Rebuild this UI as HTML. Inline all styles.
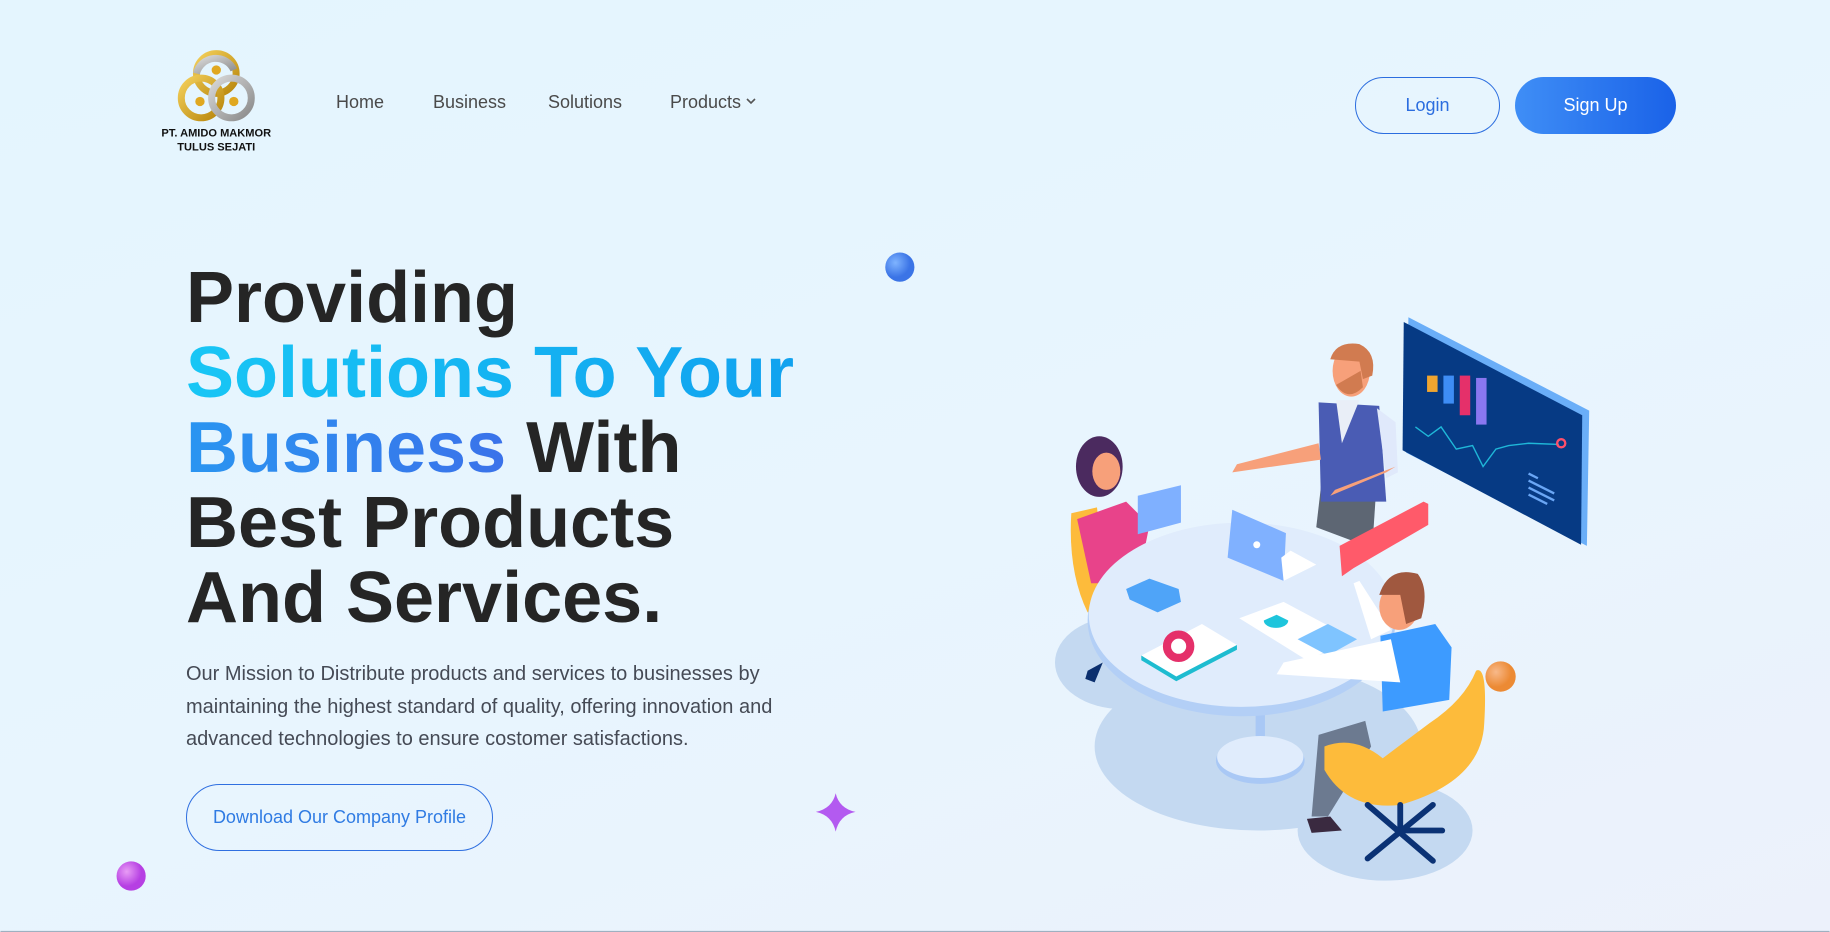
<!DOCTYPE html>
<html><head><meta charset="utf-8">
<style>
*{margin:0;padding:0;box-sizing:border-box}
body{width:1830px;height:932px;overflow:hidden;font-family:"Liberation Sans",sans-serif;background:linear-gradient(160deg,#e4f5fe 0%,#e8f5fe 55%,#ecf1fb 100%);position:relative}
.nav a{position:absolute;top:92px;font-size:18px;color:#4a4a4a;text-decoration:none}
.btn{position:absolute;top:77px;height:57px;border-radius:29px;font-size:18px;display:flex;align-items:center;justify-content:center}
h1{position:absolute;left:186px;top:261px;font-size:72px;line-height:75px;font-weight:700;color:#252525;letter-spacing:0px}
.g1{background:linear-gradient(90deg,#18c6f5,#11a2ef);-webkit-background-clip:text;background-clip:text;color:transparent}
.g2{background:linear-gradient(90deg,#2a95f1,#3a72ea);-webkit-background-clip:text;background-clip:text;color:transparent}
p.m{position:absolute;left:186px;top:658px;width:640px;font-size:20px;line-height:32.5px;color:#454a55}
.dl{position:absolute;left:186px;top:784px;width:307px;height:67px;border:1.5px solid #2f6fe0;border-radius:34px;color:#2f7be3;font-size:18px;display:flex;align-items:center;justify-content:center}
</style></head><body>
<svg style="position:absolute;left:0;top:0" width="1830" height="932" viewBox="0 0 1568 799">
<defs>
<radialGradient id="bd" cx="35%" cy="35%"><stop offset="0" stop-color="#7fb4ff"/><stop offset="1" stop-color="#3b74e6"/></radialGradient>
<radialGradient id="od" cx="35%" cy="35%"><stop offset="0" stop-color="#f8b98a"/><stop offset="1" stop-color="#ec8a34"/></radialGradient>
<radialGradient id="pd" cx="35%" cy="35%"><stop offset="0" stop-color="#e89cf5"/><stop offset="1" stop-color="#b63fe3"/></radialGradient>
<linearGradient id="gold" x1="0" y1="0" x2="1" y2="1"><stop offset="0" stop-color="#f3cf5a"/><stop offset="1" stop-color="#b8860b"/></linearGradient>
<linearGradient id="sil" x1="0" y1="0" x2="1" y2="1"><stop offset="0" stop-color="#d8d8d8"/><stop offset="1" stop-color="#8a8a8a"/></linearGradient>
</defs>
<g fill="none" stroke-width="6">
<circle cx="185" cy="63" r="17" stroke="url(#gold)"/>
<circle cx="172" cy="84" r="17" stroke="url(#gold)"/>
<circle cx="198" cy="84" r="17" stroke="url(#sil)"/>
<path d="M168 63 A17 17 0 0 1 200 60" stroke="url(#sil)"/>
</g>
<circle cx="185" cy="60" r="4" fill="#e0a820"/><circle cx="171" cy="87" r="4" fill="#e0a820"/><circle cx="200" cy="87" r="4" fill="#e0a820"/>
<text x="185" y="117" font-size="9.5" font-weight="700" text-anchor="middle" font-family="Liberation Sans" fill="#111">PT. AMIDO MAKMOR</text>
<text x="185" y="129" font-size="9.5" font-weight="700" text-anchor="middle" font-family="Liberation Sans" fill="#111">TULUS SEJATI</text>
<circle cx="771" cy="229" r="12.5" fill="url(#bd)"/>
<circle cx="1286" cy="580" r="13" fill="url(#od)"/>
<circle cx="112" cy="751" r="12.5" fill="url(#pd)"/>
<path d="M716 680 Q719 693 733 696 Q719 699 716 713 Q713 699 699 696 Q713 693 716 680Z" fill="#b35af0"/>
<ellipse cx="1078" cy="640" rx="140" ry="72" fill="#c4d9f1"/>
<ellipse cx="962" cy="568" rx="58" ry="40" fill="#c4d9f1"/>
<ellipse cx="1187" cy="712" rx="75" ry="43" fill="#c4d9f1"/>
<polygon points="1207,272 1362,352 1360,468 1205,388" fill="#6aaef8"/>
<polygon points="1203,276 1356,356 1355,467 1202,386" fill="#063a84"/>
<rect x="1223" y="322" width="9" height="14" fill="#f0a530"/>
<rect x="1237" y="322" width="9" height="24" fill="#3e8df5"/>
<rect x="1251" y="322" width="9" height="34" fill="#e5306a"/>
<rect x="1265" y="324" width="9" height="40" fill="#8a77f0"/>
<polyline points="1213,366 1224,374 1235,366 1248,385 1262,382 1271,400 1282,385 1293,382 1310,380 1336,381" fill="none" stroke="#1fb7d8" stroke-width="1.2"/>
<circle cx="1338" cy="380" r="3.5" fill="none" stroke="#ff4f6a" stroke-width="2"/>
<g stroke="#6aa6f5" stroke-width="2"><line x1="1310" y1="406" x2="1318" y2="410"/><line x1="1310" y1="412" x2="1332" y2="423"/><line x1="1310" y1="418" x2="1332" y2="429"/><line x1="1310" y1="424" x2="1326" y2="432"/></g>
<path d="M1128 452 L1134 400 L1180 410 L1176 470Z" fill="#5d6673"/>
<path d="M1130 345 L1182 348 L1188 430 L1132 430Z" fill="#4a5cb4"/>
<path d="M1145 343 L1165 343 L1150 380Z" fill="#e9eef7"/>
<path d="M1180 350 L1196 362 L1198 405 L1188 410Z" fill="#e0e9fb"/>
<path d="M1130 380 L1060 398 L1056 405 L1132 394Z" fill="#f7a07a"/>
<path d="M1188 405 L1140 425 L1144 420 L1196 400Z" fill="#f7a07a"/>
<ellipse cx="1158" cy="318" rx="16" ry="22" fill="#f7a07a"/>
<path d="M1140 308 Q1145 292 1165 295 Q1180 302 1176 322 L1168 325 L1165 310 Z" fill="#d17b50"/>
<path d="M1145 330 Q1155 345 1168 332 L1166 318 Z" fill="#d17b50"/>
<path d="M918 440 L940 435 L950 520 L932 525 Q915 490 918 440Z" fill="#fdbb3b"/>
<path d="M923 445 L965 430 L985 450 L975 500 L935 500Z" fill="#e8438a"/>
<path d="M975 425 L1012 416 L1012 448 L975 458Z" fill="#7fb0ff"/>
<ellipse cx="942" cy="400" rx="20" ry="26" fill="#4b2a5f"/>
<ellipse cx="948" cy="404" rx="12" ry="16" fill="#f7a07a"/>
<path d="M932 575 L945 568 L938 585 L930 582Z" fill="#0b2f6e"/>
<rect x="1076" y="600" width="8" height="50" fill="#a9c8f5"/>
<ellipse cx="1080" cy="652" rx="38" ry="20" fill="#a9c8f5"/>
<ellipse cx="1080" cy="649" rx="37" ry="18" fill="#e0ecfc"/>
<ellipse cx="1064" cy="532" rx="132" ry="82" fill="#b3cff6"/>
<ellipse cx="1064" cy="527" rx="131" ry="79" fill="#e0ecfc"/>
<polygon points="1056,437 1102,457 1100,498 1052,478" fill="#80b1ff"/>
<polygon points="1100,498 1128,484 1106,472 1098,478" fill="#fff"/>
<circle cx="1077" cy="467" r="3" fill="#fff"/>
<path d="M965 505 L985 496 L1010 505 L1012 516 L992 525 L968 514Z" fill="#4fa4f8"/>
<polygon points="978,562 1030,535 1060,553 1008,580" fill="#fff"/>
<polygon points="978,562 1008,580 1060,553 1060,557 1008,584 978,566" fill="#1ebcd0"/>
<circle cx="1010" cy="554" r="10" fill="none" stroke="#e5306a" stroke-width="7"/>
<polygon points="1062,530 1100,516 1160,548 1120,566" fill="#fff"/>
<path d="M1083 532 A10 6 0 0 0 1104 532 L1094 527Z" fill="#1ec5dc"/>
<polygon points="1112,548 1138,535 1163,548 1138,562" fill="#7fc4ff"/>
<polygon points="1148,468 1220,430 1224,432 1224,450 1160,487 1150,494" fill="#ff5a6a"/>
<path d="M1130 630 L1170 618 L1175 640 L1138 700 L1124 700Z" fill="#6c7a90"/>
<path d="M1120 702 L1140 700 L1150 712 L1124 714Z" fill="#3a2a40"/>
<path d="M1183 545 L1230 535 L1244 555 L1242 600 L1185 610Z" fill="#3d9bff"/>
<path d="M1192 548 L1100 568 L1094 578 L1200 585Z" fill="#fff"/>
<path d="M1175 548 L1160 500 L1165 498 L1192 540Z" fill="#fff"/>
<ellipse cx="1199" cy="520" rx="17" ry="20" fill="#f7a07a"/>
<path d="M1182 510 Q1190 485 1215 492 Q1225 505 1218 530 L1205 535 L1200 510Z" fill="#a0583f"/>
<path d="M1135 640 Q1160 630 1185 650 L1225 620 Q1255 600 1265 575 Q1275 570 1272 620 Q1270 670 1200 690 Q1155 695 1135 660Z" fill="#fdbb3b"/>
<g stroke="#0b3275" stroke-width="5" stroke-linecap="round"><line x1="1200" y1="690" x2="1200" y2="712"/><line x1="1172" y1="736" x2="1228" y2="690"/><line x1="1172" y1="690" x2="1228" y2="738"/><line x1="1200" y1="712" x2="1236" y2="712"/></g>
<line x1="0" y1="798.5" x2="1568" y2="798.5" stroke="#9fb0c0" stroke-width="1"/>
</svg>
<div class="nav"><a style="left:336px">Home</a><a style="left:433px">Business</a><a style="left:548px">Solutions</a><a style="left:670px">Products <svg width="10" height="8" viewBox="0 0 10 8" style="vertical-align:3px"><path d="M1 2 L5 6 L9 2" fill="none" stroke="#555" stroke-width="1.6"/></svg></a></div>
<div class="btn" style="left:1355px;width:145px;border:1.5px solid #2b6ddf;color:#2b6ddf">Login</div>
<div class="btn" style="left:1515px;width:161px;background:linear-gradient(90deg,#3f8ef6,#1a62e8);color:#fff">Sign Up</div>
<h1>Providing<br><span class="g1">Solutions To Your</span><br><span class="g2">Business</span> With<br>Best Products<br>And Services.</h1>
<p class="m">Our Mission to Distribute products and services to businesses by maintaining the highest standard of quality, offering innovation and advanced technologies to ensure costomer satisfactions.</p>
<div class="dl">Download Our Company Profile</div>
</body></html>
